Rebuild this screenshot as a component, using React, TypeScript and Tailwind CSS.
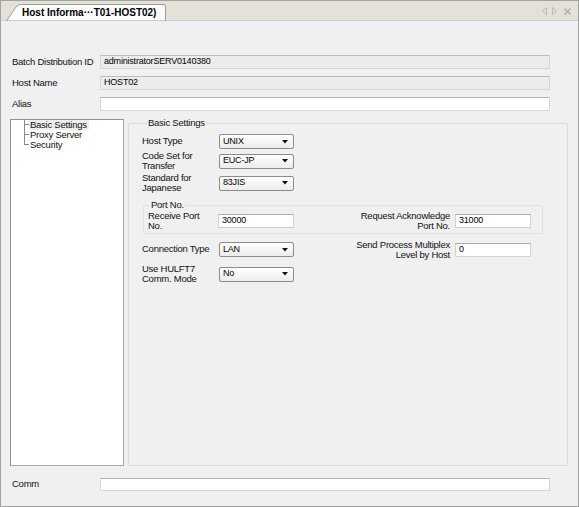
import React from "react";

const Sel = ({ v }: { v: string }) => (
  <div className="w-[75px] h-[15px] shrink-0 border border-[#8c8c8c] rounded-[2px] bg-linear-to-b from-[#ffffff] to-[#ececec] flex items-center pl-[3px] pr-[5px] text-[9px] tracking-[-0.2px] text-black">
    <span className="flex-1">{v}</span>
    <svg width="6" height="4" viewBox="0 0 6 4">
      <path d="M0 0H6L3 3.5Z" fill="#111" />
    </svg>
  </div>
);

const Inp = ({ v }: { v: string }) => (
  <div className="w-[76px] h-[14px] shrink-0 bg-white border border-[#d2d2d2] border-t-[#ababab] flex items-center pl-[3px] text-[9px] tracking-[-0.2px] text-black">
    {v}
  </div>
);

const TreeItem = ({ label, last, selected }: { label: string; last?: boolean; selected?: boolean }) => (
  <div className="flex h-[10px] items-stretch">
    <div className="w-[5px] flex flex-col">
      <div className="h-[5px] border-l border-b border-[#8a8a8a]" />
      <div className={"h-[5px] " + (last ? "" : "border-l border-[#8a8a8a]")} />
    </div>
    <span className={"leading-[10px] pl-[1px] pr-[2px] " + (selected ? "bg-[#eeeeee]" : "")}>{label}</span>
  </div>
);

export default function App() {
  return (
    <div className="w-[579px] h-[507px] flex flex-col bg-[#f0f0f0] border-l border-r border-b border-[#a3a3a3] font-['Liberation_Sans',Arial,sans-serif] text-[9.5px] tracking-[-0.25px] text-[#111] overflow-hidden">
      {/* tab bar */}
      <div className="h-[21px] shrink-0 bg-[#e4e1d7] border-t border-b border-t-[#a3a3a3] border-b-[#c4d2df] flex items-end justify-between">
        <div className="relative ml-[5px] w-[161px] h-[17px] mb-[-1px]">
          <svg className="absolute inset-0" width="161" height="17" viewBox="0 0 161 17">
            <path d="M0.5 17 L10 3 Q12 0.5 15 0.5 L157 0.5 Q159.5 0.5 159.5 3 L159.5 17 Z" fill="#fbfbfb" stroke="#9d9d9d" />
          </svg>
          <span className="relative block pl-[16px] pt-[3px] text-[10px] leading-[12px] font-bold tracking-normal text-black">
            Host Informa···T01-HOST02)
          </span>
        </div>
        <div className="flex items-center gap-[5px] mr-[7px] mb-[5px]">
          <svg width="5" height="8" viewBox="0 0 5 8">
            <path d="M4.5 0.5 L0.5 4 L4.5 7.5 Z" fill="none" stroke="#b9b9b9" />
          </svg>
          <svg width="5" height="8" viewBox="0 0 5 8">
            <path d="M0.5 0.5 L4.5 4 L0.5 7.5 Z" fill="none" stroke="#b9b9b9" />
          </svg>
          <svg className="ml-[2px]" width="7" height="7" viewBox="0 0 7 7">
            <path d="M0.5 0.5 L6.5 6.5 M6.5 0.5 L0.5 6.5" stroke="#a9a9a9" strokeWidth="1.2" />
          </svg>
        </div>
      </div>

      {/* body */}
      <div className="flex-1 flex flex-col pt-[34px] pb-[15px]">
        <div className="flex items-center h-[14px] pl-[11px]">
          <span className="w-[88px]">Batch Distribution ID</span>
          <div className="w-[450px] h-[14px] bg-[#ececec] border border-[#d6d6d6] border-t-[#bcbcbc] flex items-center pl-[3px] text-[9px] tracking-[-0.2px] text-black">
            administratorSERV0140380
          </div>
        </div>
        <div className="flex items-center h-[14px] mt-[7px] pl-[11px]">
          <span className="w-[88px]">Host Name</span>
          <div className="w-[450px] h-[14px] bg-[#ececec] border border-[#d6d6d6] border-t-[#bcbcbc] flex items-center pl-[3px] text-[9px] tracking-[-0.2px] text-black">
            HOST02
          </div>
        </div>
        <div className="flex items-center h-[14px] mt-[7px] pl-[11px]">
          <span className="w-[88px]">Alias</span>
          <div className="w-[450px] h-[14px] bg-white border border-[#d6d6d6] border-t-[#b4b4b4]" />
        </div>

        {/* tree + group */}
        <div className="flex-1 flex mt-[7px] pl-[9px] pr-[10px]">
          <div className="w-[114px] mt-[1px] bg-white border border-[#8f8f8f] border-r-[#a9a9a9] border-b-[#a9a9a9] pl-[13px]">
            <TreeItem label="Basic Settings" selected />
            <TreeItem label="Proxy Server" />
            <TreeItem label="Security" last />
          </div>
          <fieldset className="flex-1 ml-[4px] border border-[#dadada] rounded-[2px] pl-[13px] pt-[6px] min-w-0">
            <legend className="ml-[5px] px-[1px] leading-[10px]">Basic Settings</legend>
            <div className="flex items-center h-[15px]">
              <span className="w-[77px]">Host Type</span>
              <Sel v="UNIX" />
            </div>
            <div className="flex items-center h-[18px] mt-[3px]">
              <span className="w-[77px] leading-[10px]">Code Set for<br />Transfer</span>
              <Sel v="EUC-JP" />
            </div>
            <div className="flex items-center h-[18px] mt-[4px]">
              <span className="w-[77px] leading-[10px]">Standard for<br />Japanese</span>
              <Sel v="83JIS" />
            </div>
            <fieldset className="w-[400px] ml-[1px] mt-[8px] border border-[#e0e0e0] rounded-[2px] pt-[2px] pb-[3px]">
              <legend className="ml-[6px] px-[1px] leading-[10px]">Port No.</legend>
              <div className="flex items-center h-[18px] pl-[4px]">
                <span className="w-[70px] leading-[10px]">Receive Port<br />No.</span>
                <Inp v="30000" />
                <span className="w-[156px] text-right leading-[10px]">Request Acknowledge<br />Port No.</span>
                <div className="ml-[5px]"><Inp v="31000" /></div>
              </div>
            </fieldset>
            <div className="flex items-center h-[15px] mt-[8px]">
              <span className="w-[77px]">Connection Type</span>
              <Sel v="LAN" />
              <span className="w-[156px] text-right leading-[10px]">Send Process Multiplex<br />Level by Host</span>
              <div className="ml-[5px]"><Inp v="0" /></div>
            </div>
            <div className="flex items-center h-[18px] mt-[8px]">
              <span className="w-[77px] leading-[10px]">Use HULFT7<br />Comm. Mode</span>
              <Sel v="No" />
            </div>
          </fieldset>
        </div>

        <div className="flex items-center h-[13px] mt-[12px] pl-[11px]">
          <span className="w-[88px]">Comm</span>
          <div className="w-[450px] h-[13px] bg-white border border-[#d6d6d6] border-t-[#b4b4b4]" />
        </div>
      </div>
    </div>
  );
}
